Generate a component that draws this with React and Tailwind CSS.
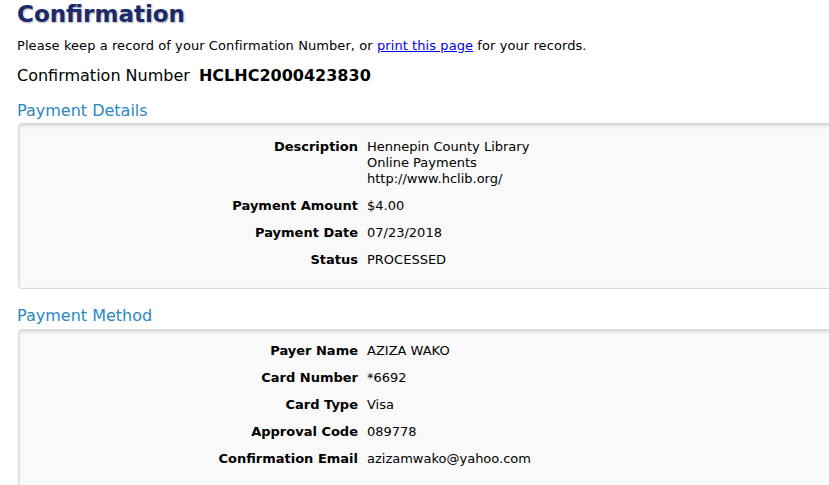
import React from "react";

function Row({ label, children }) {
  return (
    <div className="flex">
      <div className="w-[348px] shrink-0 pr-[9px] text-right font-bold">{label}</div>
      <div>{children}</div>
    </div>
  );
}

export default function App() {
  return (
    <div
      className="w-[829px] h-[485px] overflow-hidden bg-white text-[13px] leading-[16px] text-black"
      style={{ fontFamily: '"DejaVu Sans", Verdana, sans-serif' }}
    >
      <div className="pl-[17px]">
        <h1 className="text-[23px] leading-[28px] font-bold text-[#1b2a6b] [text-shadow:1px_1px_2px_rgba(0,0,0,0.3)]">
          Confirmation
        </h1>
        <p className="mt-[10px] tracking-[0.08px]">
          Please keep a record of your Confirmation Number, or{" "}
          <a href="#" className="text-[#0000ee] underline">print this page</a> for your records.
        </p>
        <div className="mt-[12px] text-[16px] leading-[20px]">
          Confirmation Number <span className="ml-[4px] font-bold">HCLHC2000423830</span>
        </div>
        <h2 className="mt-[15px] text-[16px] leading-[20px] text-[#2b87c1]">Payment Details</h2>
      </div>
      <div className="ml-[18px] mt-[2px] w-[900px] rounded-[4px] border border-[#d8d8d8] bg-[#f9f9f9] shadow-[inset_0_2px_3px_rgba(0,0,0,0.12)] pt-[15px] pb-[20px] flex flex-col gap-[11px]">
        <Row label="Description">
          <div>Hennepin County Library</div>
          <div>Online Payments</div>
          <div>http://www.hclib.org/</div>
        </Row>
        <Row label="Payment Amount">$4.00</Row>
        <Row label="Payment Date">07/23/2018</Row>
        <Row label="Status">PROCESSED</Row>
      </div>
      <div className="pl-[17px]">
        <h2 className="mt-[17px] text-[16px] leading-[20px] text-[#2b87c1]">Payment Method</h2>
      </div>
      <div className="ml-[18px] mt-[3px] w-[900px] rounded-[4px] border border-[#d8d8d8] bg-[#f9f9f9] shadow-[inset_0_2px_3px_rgba(0,0,0,0.12)] pt-[13px] pb-[21px] flex flex-col gap-[11px]">
        <Row label="Payer Name">AZIZA WAKO</Row>
        <Row label="Card Number">*6692</Row>
        <Row label="Card Type">Visa</Row>
        <Row label="Approval Code">089778</Row>
        <Row label="Confirmation Email">azizamwako@yahoo.com</Row>
      </div>
    </div>
  );
}
